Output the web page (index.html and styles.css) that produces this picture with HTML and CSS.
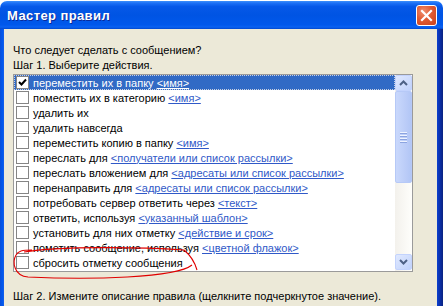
FILE: index.html
```
<!DOCTYPE html>
<html lang="ru">
<head>
<meta charset="utf-8">
<title>Мастер правил</title>
<link rel="stylesheet" href="styles.css">
</head>
<body>
<div class="window">
  <div class="titlebar">
    <span class="title">Мастер правил</span>
    <span class="close"><svg width="13" height="13" viewBox="0 0 13 13"><path d="M2 2 L11 11 M11 2 L2 11" stroke="#fff" stroke-width="2.2" stroke-linecap="square"/></svg></span>
  </div>
  <div class="frame">
    <div class="border-left"></div>
    <div class="client">
      <p class="line">Что следует сделать с сообщением?</p>
      <p class="line">Шаг 1. Выберите действия.</p>
      <div class="listbox">
        <div class="rows">
          <div class="row selected"><span class="cb checked"><svg width="11" height="11" viewBox="0 0 11 11"><path d="M2 5 L4.5 7.5 L9 2.5" fill="none" stroke="#000" stroke-width="2"/></svg></span><span class="txt">переместить их в папку <u class="link">&lt;имя&gt;</u></span></div>
          <div class="row"><span class="cb"></span><span class="txt">поместить их в категорию <u class="link">&lt;имя&gt;</u></span></div>
          <div class="row"><span class="cb"></span><span class="txt">удалить их</span></div>
          <div class="row"><span class="cb"></span><span class="txt">удалить навсегда</span></div>
          <div class="row"><span class="cb"></span><span class="txt">переместить копию в папку <u class="link">&lt;имя&gt;</u></span></div>
          <div class="row"><span class="cb"></span><span class="txt">переслать для <u class="link">&lt;получатели или список рассылки&gt;</u></span></div>
          <div class="row"><span class="cb"></span><span class="txt">переслать вложением для <u class="link">&lt;адресаты или список рассылки&gt;</u></span></div>
          <div class="row"><span class="cb"></span><span class="txt">перенаправить для <u class="link">&lt;адресаты или список рассылки&gt;</u></span></div>
          <div class="row"><span class="cb"></span><span class="txt">потребовать сервер ответить через <u class="link">&lt;текст&gt;</u></span></div>
          <div class="row"><span class="cb"></span><span class="txt">ответить, используя <u class="link">&lt;указанный шаблон&gt;</u></span></div>
          <div class="row"><span class="cb"></span><span class="txt">установить для них отметку <u class="link">&lt;действие и срок&gt;</u></span></div>
          <div class="row"><span class="cb"></span><span class="txt">пометить сообщение, используя <u class="link">&lt;цветной флажок&gt;</u></span></div>
          <div class="row"><span class="cb"></span><span class="txt">сбросить отметку сообщения</span></div>
        </div>
        <div class="scrollbar">
          <div class="sbtn"><svg width="9" height="6" viewBox="0 0 9 6"><path d="M1 5 L4.5 1.5 L8 5" fill="none" stroke="#4d6185" stroke-width="2"/></svg></div>
          <div class="track">
            <div class="thumb"><span class="grip"></span><span class="grip"></span><span class="grip"></span><span class="grip"></span></div>
          </div>
          <div class="sbtn"><svg width="9" height="6" viewBox="0 0 9 6"><path d="M1 1 L4.5 4.5 L8 1" fill="none" stroke="#4d6185" stroke-width="2"/></svg></div>
        </div>
      </div>
      <p class="line step2">Шаг 2. Измените описание правила (щелкните подчеркнутое значение).</p>
    </div>
    <div class="border-right"></div>
  </div>
  <svg class="annot" width="443" height="306" viewBox="0 0 443 306"><path d="M24 252 C 60 246, 140 247, 184 250 C 190 255, 195 263, 197 270 M 192 265 C 176 278, 90 280, 28 277 C 14 276, 12 262, 16 255 C 18 251, 22 250, 32 250" fill="none" stroke="#e00000" stroke-width="1.1"/></svg>
</div>
</body>
</html>
```
FILE: styles.css
```
html, body {
  margin: 0;
  padding: 0;
  background: #ffffff;
  overflow: hidden;
}
.window {
  position: relative;
  width: 443px;
  height: 306px;
  display: flex;
  flex-direction: column;
  padding-top: 1px;
  box-sizing: border-box;
  font-family: "Liberation Sans", Arial, sans-serif;
  font-size: 11px;
}
.titlebar {
  height: 28px;
  flex: none;
  border-radius: 7px 7px 0 0;
  background: linear-gradient(to bottom, #3c8ffb 0%, #1c6ff5 8%, #0658e8 20%, #0054e3 50%, #0058ec 85%, #0a62f2 93%, #0048d0 100%);
  display: flex;
  align-items: center;
  justify-content: space-between;
  padding: 0 6px 0 7px;
  box-sizing: border-box;
}
.title {
  color: #fff;
  font-family: "Liberation Sans", Arial, sans-serif;
  font-weight: bold;
  font-size: 13px;
  letter-spacing: 0.4px;
  text-shadow: 1px 1px 0 #0a2a9a;
  margin-top: 1px;
}
.close {
  width: 21px;
  height: 21px;
  box-sizing: border-box;
  border: 1px solid #fff;
  border-radius: 3px;
  background: radial-gradient(circle at 35% 30%, #f09070 0%, #e05a32 45%, #c8401c 100%);
  display: flex;
  align-items: center;
  justify-content: center;
}
.frame {
  flex: 1;
  display: flex;
}
.border-left {
  width: 4px;
  background: linear-gradient(to right, #0a4ed8, #0058ee 60%, #1a5fe8);
}
.border-right {
  width: 6px;
  background: linear-gradient(to right, #0b3fd0, #0a2fa8 50%, #0a2380);
}
.client {
  flex: 1;
  background: #ece9d8;
  padding: 14px 0 0 9px;
  color: #000;
}
.line {
  margin: 0;
  height: 15px;
  line-height: 15px;
  white-space: nowrap;
}
.listbox {
  margin-top: 1px;
  width: 400px;
  height: 198px;
  box-sizing: border-box;
  border: 1px solid #9a9a9a;
  background: #fff;
  display: flex;
}
.rows {
  flex: 1;
  display: flex;
  flex-direction: column;
}
.row {
  height: 15px;
  display: flex;
  align-items: center;
  white-space: nowrap;
  box-sizing: border-box;
  padding-left: 2px;
}
.row.selected {
  background: #316ac5;
  color: #fff;
  outline: 1px dotted #c8d0e0;
  outline-offset: -1px;
}
.row.selected .link {
  color: #fff;
}
.cb {
  width: 13px;
  height: 13px;
  box-sizing: border-box;
  border: 1px solid #858585;
  background: #fff;
  flex: none;
  display: flex;
  align-items: center;
  justify-content: center;
}
.txt {
  margin-left: 4px;
  line-height: 15px;
  padding-top: 1px;
}
.link {
  color: #3059c8;
  text-decoration: underline;
}
.scrollbar {
  width: 17px;
  flex: none;
  display: flex;
  flex-direction: column;
  background: linear-gradient(to right, #f3f1ec, #fefefb);
  padding-bottom: 1px;
}
.sbtn {
  height: 16px;
  flex: none;
  box-sizing: border-box;
  border: 1px solid #c3d3fd;
  border-radius: 2px;
  background: linear-gradient(to bottom right, #e0e9ff, #c0d2fb);
  display: flex;
  align-items: center;
  justify-content: center;
}
.track {
  flex: 1;
}
.thumb {
  margin-top: 0;
  height: 92px;
  box-sizing: border-box;
  border: 1px solid #b6c9f7;
  border-radius: 2px;
  background: linear-gradient(to right, #c9d8fc, #bccdf8 60%, #b2c6f6);
  display: flex;
  flex-direction: column;
  align-items: center;
  justify-content: center;
  gap: 1px;
}
.grip {
  width: 7px;
  height: 1px;
  background: #eef3ff;
  border-bottom: 1px solid #8ca4e0;
}
.step2 {
  margin-top: 17px;
}
.annot {
  position: absolute;
  left: 0;
  top: 0;
  pointer-events: none;
}
```
